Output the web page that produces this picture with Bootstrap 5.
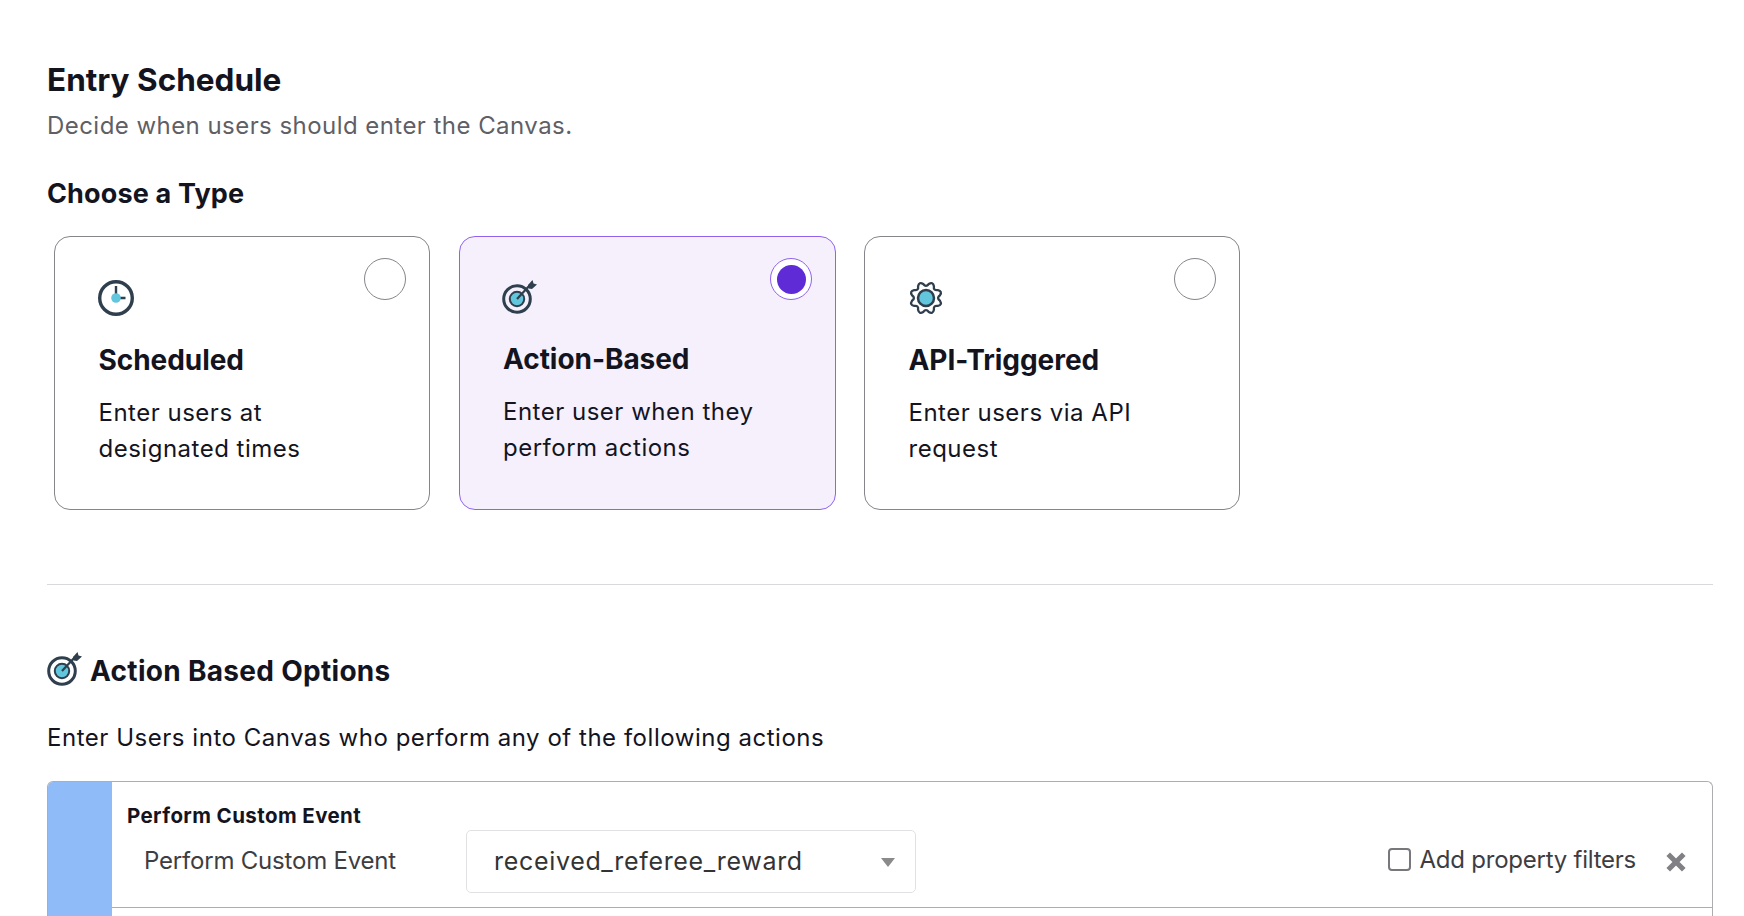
<!DOCTYPE html>
<html lang="en">
<head>
<meta charset="utf-8">
<title>Entry Schedule</title>
<link rel="stylesheet" href="https://cdn.jsdelivr.net/npm/bootstrap@5.3.0/dist/css/bootstrap.min.css">
<style>
html,body{height:916px;overflow:hidden;background:#fff}
body{font-family:"Inter","Liberation Sans",sans-serif;color:#14141f;padding:0 31px 0 47px}
.page-title{font-size:31.5px;font-weight:700;line-height:40px;margin:60px 0 0}
.page-sub{font-size:24px;line-height:30px;color:#5f5f66;margin:11px 0 0;letter-spacing:.45px}
.type-title{font-size:27px;font-weight:700;line-height:36px;margin:35px 0 0;letter-spacing:.15px}
.type-row{gap:28.500px;margin:24px 0 0 7px}
.type-card{width:376px;height:274px;border:1px solid #85858b;border-radius:16px;padding:43px 43.500px 0;background:#fff}
.type-card.on{width:377px;background:#f5f0fc;border-color:#8f63ee}
.type-card svg{display:block;width:38px;height:38px;margin-left:-2px}
.type-name{font-size:28px;font-weight:700;line-height:36px;margin:24px 0 0;letter-spacing:-.05px}
.on .type-name{margin-top:23px}
.type-desc{font-size:24px;line-height:36px;margin:17px 0 0;letter-spacing:.5px}
.type-radio{top:21px;right:23px;width:42px;height:42px;border:1px solid #85858b;border-radius:50%;background:#fff}
.on .type-radio{border-color:#8f63ee;padding:6px}
.radio-dot{width:29px;height:29px;border-radius:50%;background:#5f2bd6}
.rule{border:0;border-top:1px solid #d9d9dc;opacity:1;margin:74px 0 0}
.opt-head{font-size:28px;font-weight:700;line-height:36px;margin:67px 0 0;gap:6px;letter-spacing:.3px}
.opt-head svg{width:38px;height:38px;margin-left:-1px}
.opt-sub{font-size:24px;line-height:30px;margin:33px 0 0;letter-spacing:.53px}
.rule-box{height:137px;margin-top:28px;border:1px solid #adadb0;border-bottom:0;border-radius:6px 6px 0 0;overflow:hidden}
.rule-bar{width:64px;background:#8fbbf9}
.rule-body{min-width:0}
.rule-top{height:126px;border-bottom:1px solid #adadb0;padding:21px 26px 0 15px}
.rule-label{font-size:20.500px;font-weight:700;line-height:26px;letter-spacing:.4px}
.rule-line{margin-top:1px}
.evt-name{font-size:24px;line-height:30px;color:#3d3d42;width:339px;padding-left:17px;letter-spacing:-.2px;margin-bottom:2px}
.evt-select{width:450px;height:63px;border:1px solid #e1e1e3;border-radius:5px;padding:0 20px 0 27px;font-size:25px;color:#333;letter-spacing:.68px}
.evt-caret{width:0;height:0;border-left:7px solid transparent;border-right:7px solid transparent;border-top:9px solid #8a8a8a;margin-top:2px}
.evt-check{width:23px;height:23px;border:2px solid #77777c;border-radius:4px;background:#fff}
.evt-filter{font-size:24px;line-height:30px;color:#3d3d42;gap:9px;letter-spacing:-.24px;margin-bottom:4px}
.evt-close{width:20px;height:20px;margin-left:21px;margin-top:4px}
</style>
</head>
<body>
<h1 class="page-title">Entry Schedule</h1>
<p class="page-sub">Decide when users should enter the Canvas.</p>
<h2 class="type-title">Choose a Type</h2>
<div class="d-flex type-row">
  <div class="type-card position-relative">
    <svg viewBox="0 0 38 38"><circle cx="19" cy="18" r="16.300" fill="none" stroke="#2f3f4d" stroke-width="3.400"/><path d="M19 6v12M19 18h9.500" stroke="#2f3f4d" stroke-width="2.400" fill="none"/><circle cx="19" cy="18" r="4.800" fill="#62c6dc"/></svg>
    <div class="type-radio position-absolute"></div>
    <div class="type-name">Scheduled</div>
    <div class="type-desc">Enter users at<br>designated times</div>
  </div>
  <div class="type-card on position-relative">
    <svg viewBox="0 0 38 38"><circle cx="16" cy="19" r="13.300" fill="none" stroke="#2f3f4d" stroke-width="3"/><circle cx="16" cy="19" r="7.200" fill="#62c6dc" stroke="#2f3f4d" stroke-width="2"/><path d="M16 19 29 5" stroke="#2f3f4d" stroke-width="2.200"/><path d="M27 5l4.500-5 1 3.500 3.500 1-5 4.500-3.500-.5z" fill="#2f3f4d"/></svg>
    <div class="type-radio position-absolute"><div class="radio-dot"></div></div>
    <div class="type-name">Action-Based</div>
    <div class="type-desc">Enter user when they<br>perform actions</div>
  </div>
  <div class="type-card position-relative">
    <svg viewBox="0 0 38 38"><path d="M21.870 4.580Q26.080 1.910 27.170 6.780Q26.420 11.580 31.220 10.830Q36.090 11.920 33.420 16.130Q29.500 19 33.420 21.870Q36.090 26.080 31.220 27.170Q26.420 26.420 27.170 31.220Q26.080 36.090 21.870 33.420Q19 29.500 16.130 33.420Q11.920 36.090 10.830 31.220Q11.580 26.420 6.780 27.170Q1.910 26.080 4.580 21.870Q8.500 19 4.580 16.130Q1.910 11.920 6.780 10.830Q11.580 11.580 10.830 6.780Q11.920 1.910 16.130 4.580Q19 8.500 21.870 4.580Z" fill="none" stroke="#2f3f4d" stroke-width="2.400" transform="translate(.57 -.43) scale(.97)"/><circle cx="19" cy="18" r="8" fill="#62c6dc" stroke="#2f3f4d" stroke-width="2.500"/></svg>
    <div class="type-radio position-absolute"></div>
    <div class="type-name">API-Triggered</div>
    <div class="type-desc">Enter users via API<br>request</div>
  </div>
</div>
<hr class="rule">
<div class="d-flex align-items-center opt-head">
  <svg viewBox="0 0 38 38"><circle cx="16" cy="19" r="13.300" fill="none" stroke="#2f3f4d" stroke-width="3"/><circle cx="16" cy="19" r="7.200" fill="#62c6dc" stroke="#2f3f4d" stroke-width="2"/><path d="M16 19 29 5" stroke="#2f3f4d" stroke-width="2.200"/><path d="M27 5l4.500-5 1 3.500 3.500 1-5 4.500-3.500-.5z" fill="#2f3f4d"/></svg>
  <span>Action Based Options</span>
</div>
<p class="opt-sub">Enter Users into Canvas who perform any of the following actions</p>
<div class="d-flex rule-box">
  <div class="rule-bar flex-shrink-0"></div>
  <div class="rule-body flex-grow-1">
    <div class="rule-top">
      <div class="rule-label">Perform Custom Event</div>
      <div class="d-flex align-items-center rule-line">
        <div class="evt-name">Perform Custom Event</div>
        <div class="evt-select d-flex align-items-center justify-content-between"><span>received_referee_reward</span><span class="evt-caret"></span></div>
        <div class="d-flex align-items-center evt-filter ms-auto"><span class="evt-check"></span><span>Add property filters</span>
          <svg class="evt-close" viewBox="0 0 18 18"><path d="M2 2l14 14M16 2 2 16" stroke="#808085" stroke-width="4.600"/></svg>
        </div>
      </div>
    </div>
  </div>
</div>
<script src="https://cdn.jsdelivr.net/npm/bootstrap@5.3.0/dist/js/bootstrap.bundle.min.js"></script>
</body>
</html>
